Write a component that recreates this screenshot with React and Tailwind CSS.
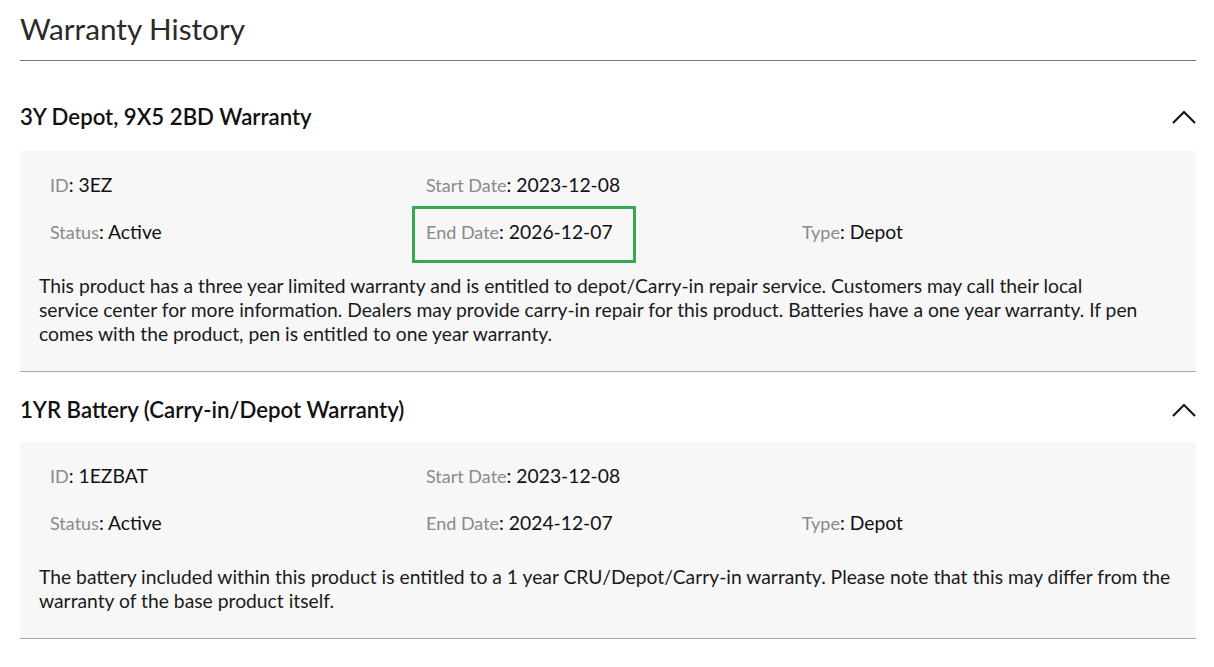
import { useState } from "react";

const warranties = [
  {
    title: "3Y Depot, 9X5 2BD Warranty",
    id: "3EZ",
    start: "2023-12-08",
    status: "Active",
    end: "2026-12-07",
    type: "Depot",
    highlightEnd: true,
    description: [
      "This product has a three year limited warranty and is entitled to depot/Carry-in repair service. Customers may call their local",
      "service center for more information. Dealers may provide carry-in repair for this product. Batteries have a one year warranty. If pen comes with the product, pen is entitled to one year warranty.",
    ],
  },
  {
    title: "1YR Battery (Carry-in/Depot Warranty)",
    id: "1EZBAT",
    start: "2023-12-08",
    status: "Active",
    end: "2024-12-07",
    type: "Depot",
    highlightEnd: false,
    description: [
      "The battery included within this product is entitled to a 1 year CRU/Depot/Carry-in warranty. Please note that this may differ from the warranty of the base product itself.",
    ],
  },
];

const Field = ({ label, value, highlight }) => (
  <div className="relative h-[47px] flex items-center pl-[11px]">
    {highlight && (
      <div className="absolute left-[-3px] top-[-3px] w-[224px] h-[57px] border-[3px] border-[#36a852]" />
    )}
    <span className="text-[18px] text-[#8a8a8a]">{label}</span>
    <span className="text-[19.3px] text-[#111]">: {value}</span>
  </div>
);

const Chevron = ({ open }) => (
  <svg
    width="24"
    height="14"
    viewBox="0 0 24 14"
    fill="none"
    stroke="#111"
    strokeWidth="2"
    className={open ? "" : "rotate-180"}
  >
    <polyline points="1,13 12,2 23,13" />
  </svg>
);

const WarrantyItem = ({ w, first }) => {
  const [open, setOpen] = useState(true);

  return (
    <div className="border-b border-[#a8a8a8]">
      <button
        onClick={() => setOpen(!open)}
        className={`w-full flex items-center justify-between text-left ${
          first ? "pt-[43px] pb-[21px]" : "pt-[25px] pb-[19px]"
        }`}
      >
        <h2 className="text-[22.2px] font-semibold text-[#111] leading-[26px]">
          {w.title}
        </h2>
        <Chevron open={open} />
      </button>

      {open && (
        <div className="bg-[#f7f7f7] pt-[11px] pb-[25px] px-[19px]">
          <div className="grid grid-cols-[376px_376px_376px]">
            <Field label="ID" value={w.id} />
            <Field label="Start Date" value={w.start} />
            <div />
            <Field label="Status" value={w.status} />
            <Field label="End Date" value={w.end} highlight={w.highlightEnd} />
            <Field label="Type" value={w.type} />
          </div>
          <p className="mt-[18px] text-[19.3px] leading-[24px] text-[#1a1a1a]">
            {w.description.map((line, i) => (
              <span key={i}>
                {i > 0 && <br />}
                {line}
              </span>
            ))}
          </p>
        </div>
      )}
    </div>
  );
};

export default function App() {
  return (
    <div
      className="bg-white min-h-screen px-[20px] pr-[18px]"
      style={{ fontFamily: "Lato, 'Open Sans', sans-serif" }}
    >
      <h1 className="text-[29.7px] text-[#2a2a2a] pt-[9px] pb-[12px] leading-[39px] border-b border-[#777]">
        Warranty History
      </h1>
      {warranties.map((w, i) => (
        <WarrantyItem key={w.title} w={w} first={i === 0} />
      ))}
    </div>
  );
}
